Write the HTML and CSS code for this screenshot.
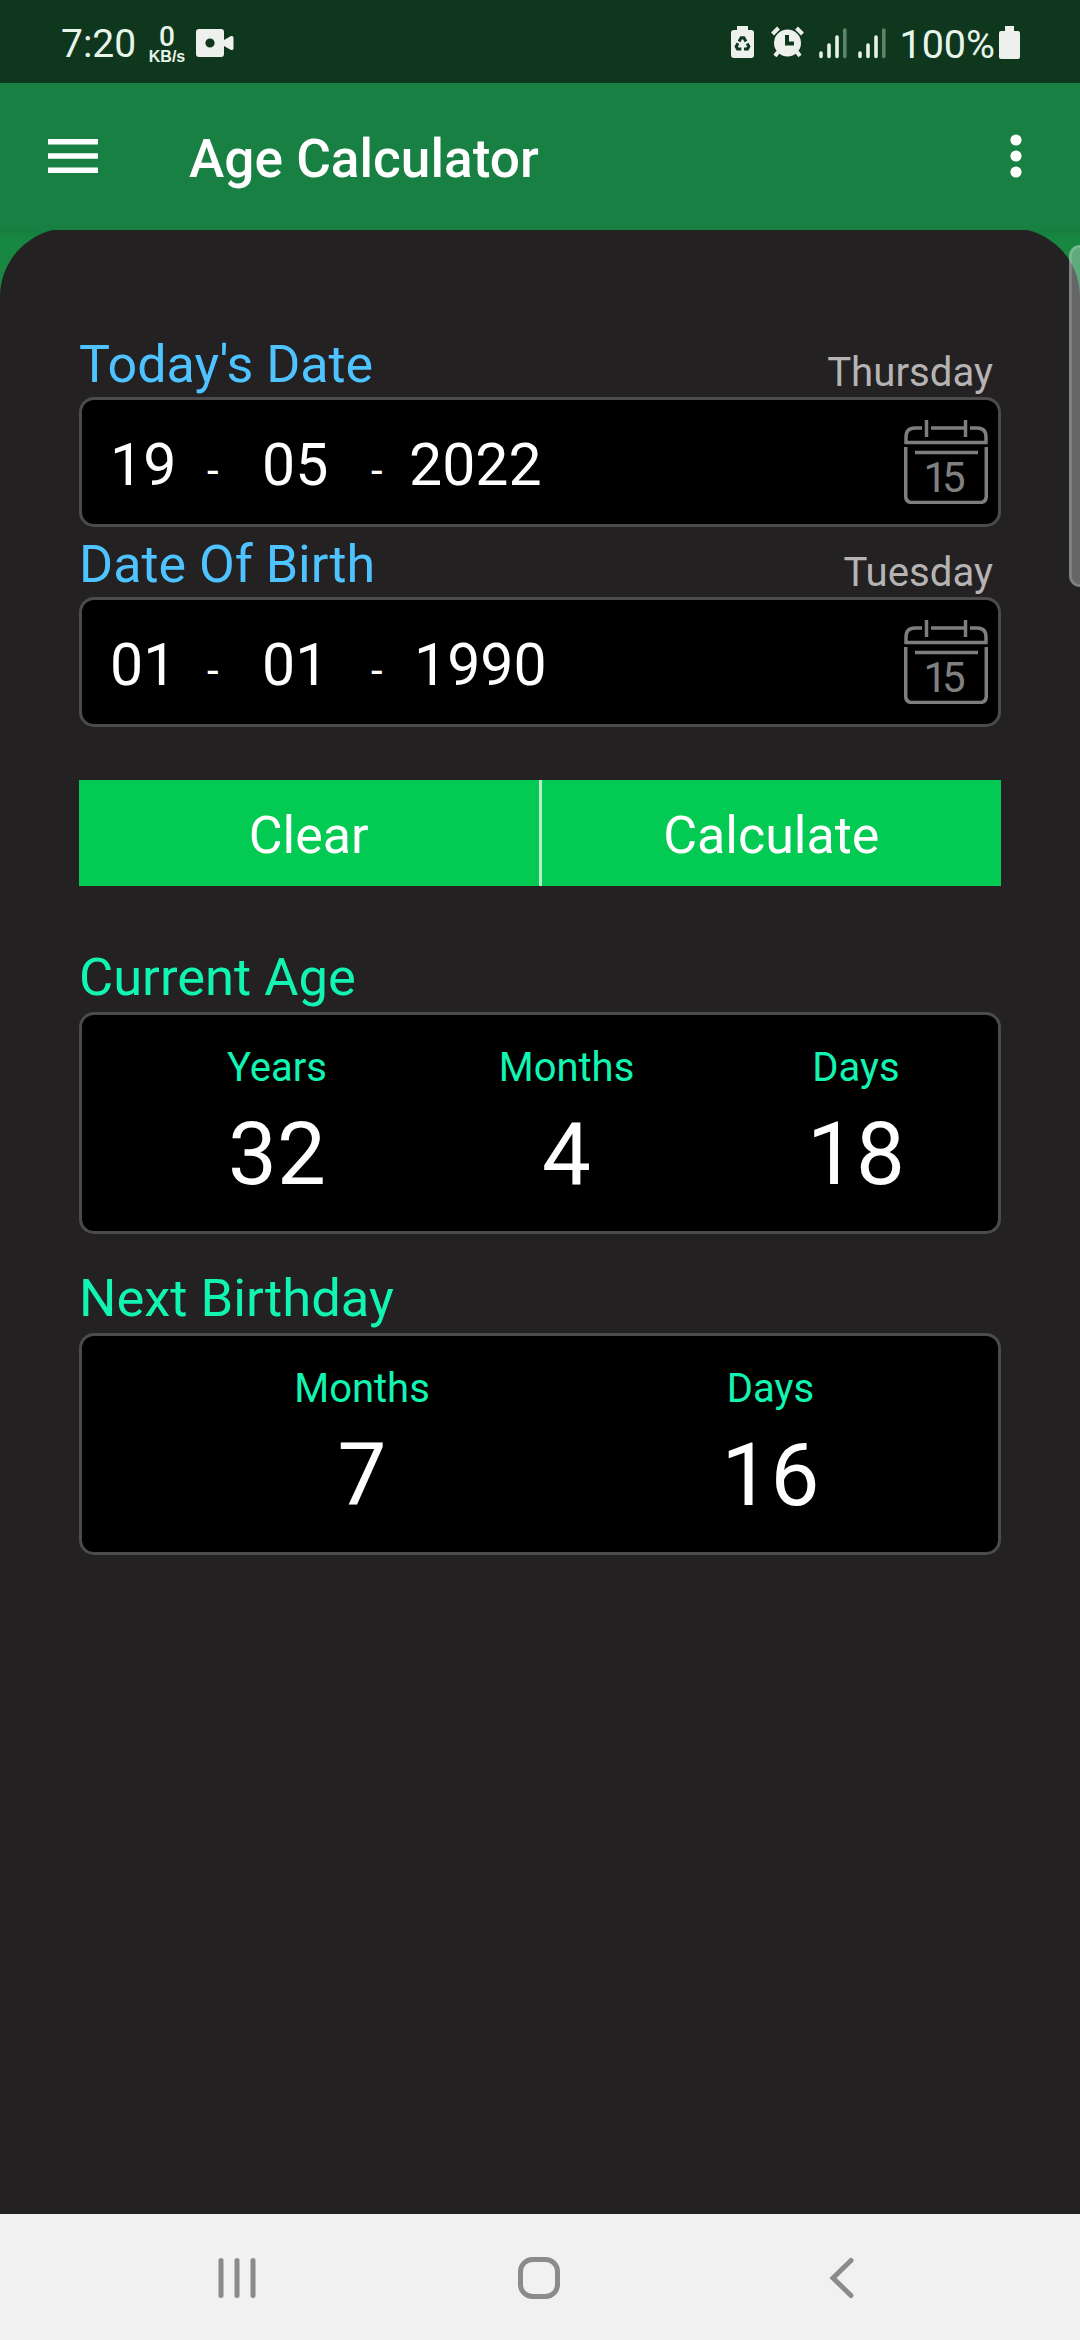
FILE: index.html
```html
<!DOCTYPE html>
<html lang="en">
<head>
    <meta charset="UTF-8">
    <meta name="viewport" content="width=device-width, initial-scale=1.0">
    <title>Age Calculator</title>
    <link rel="stylesheet" href="styles.css">
</head>
<body>
    <div class="status-bar">
        <span class="clock">7:20</span>
        <div class="net-speed">
            <span class="speed">0</span>
            <span class="unit">KB/s</span>
        </div>
        <svg class="video" width="38" height="28" viewBox="0 0 38 28">
            <path fill="#eef0ee" fill-rule="evenodd" d="M3 0h22a3 3 0 0 1 3 3v8l7-4q2.500-.5 2.500 1.500v11q0 2-2.500 1.500l-7-4v8a3 3 0 0 1-3 3H3a3 3 0 0 1-3-3V3a3 3 0 0 1 3-3zM14 9.400a4.600 4.600 0 1 0 0 9.200 4.600 4.600 0 0 0 0-9.200z"/>
        </svg>
        <div class="status-right">
            <svg class="saver" width="23" height="32" viewBox="0 0 23 32">
                <path fill="#eef0ee" d="M6 0h11v4h3a3 3 0 0 1 3 3v22a3 3 0 0 1-3 3H3a3 3 0 0 1-3-3V7a3 3 0 0 1 3-3h3z"/>
                <g fill="none" stroke="#0f371e" stroke-width="3">
                    <path d="M8 15.500l2.200-3.800h2.600l2.200 3.800"/>
                    <path d="M16.200 17.500l1.600 3-1.300 2.500h-3.500"/>
                    <path d="M10.300 23H6.500l-1.300-2.500 1.800-3.200"/>
                </g>
            </svg>
            <svg class="alarm" width="33" height="32" viewBox="0 0 33 32">
                <circle cx="16.500" cy="17" r="13.500" fill="#eef0ee"/>
                <path d="M1.500 8l6-6M31.500 8l-6-6" stroke="#eef0ee" stroke-width="4"/>
                <path d="M7 26l-3 4M26 26l3 4" stroke="#eef0ee" stroke-width="4"/>
                <path d="M16 9v8.500h7" fill="none" stroke="#0f371e" stroke-width="4"/>
            </svg>
            <svg class="signal" width="28" height="31" viewBox="0 0 28 31">
                <g stroke="#e6f2e8" stroke-width="3.600" stroke-linecap="round">
                    <path d="M2 25v3.500M10 17v11.500M18 9v19.500"/>
                    <path stroke="#5c8466" d="M25.800 2v26.500"/>
                </g>
            </svg>
            <svg class="signal" width="28" height="31" viewBox="0 0 28 31">
                <g stroke="#e6f2e8" stroke-width="3.600" stroke-linecap="round">
                    <path d="M2 25v3.500M10 17v11.500M18 9v19.500"/>
                    <path stroke="#5c8466" d="M25.800 2v26.500"/>
                </g>
            </svg>
            <span class="percent">100%</span>
            <svg class="battery" width="21" height="33" viewBox="0 0 21 33">
                <path fill="#eef0ee" d="M6 0h9v5h4a2 2 0 0 1 2 2v24a2 2 0 0 1-2 2H2a2 2 0 0 1-2-2V7a2 2 0 0 1 2-2h4z"/>
            </svg>
        </div>
    </div>

    <div class="app-bar">
        <svg width="50" height="34" viewBox="0 0 50 34">
            <path fill="#fff" d="M0 0h50v5.500H0zM0 14.200h50v5.500H0zM0 28.500h50V34H0z"/>
        </svg>
        <h1 class="title">Age Calculator</h1>
        <svg class="more" width="12" height="44" viewBox="0 0 12 44">
            <g fill="#fff">
                <circle cx="6" cy="6" r="5.600"/>
                <circle cx="6" cy="22" r="5.600"/>
                <circle cx="6" cy="38" r="5.600"/>
            </g>
        </svg>
    </div>

    <div class="page">
        <div class="panel">
            <div class="label-row">
                <span class="label blue">Today's Date</span>
                <span class="weekday">Thursday</span>
            </div>
            <div class="date-box">
                <span class="num day">19</span>
                <span class="dash">-</span>
                <span class="num month">05</span>
                <span class="dash">-</span>
                <span class="num year">2022</span>
                <svg class="calendar" width="84" height="84" viewBox="0 0 84 84">
                    <g fill="none" stroke="#7e7e7e" stroke-width="3.500">
                        <path d="M18 8H11q-9 0-9 9v5.500h80V17q0-9-9-9h-7M27 8h33"/>
                        <path d="M22.500 0v17M61.500 0v17"/>
                        <path d="M1.700 27v49q0 6.500 6.500 6.500h67.600q6.500 0 6.500-6.500V27"/>
                        <path d="M11 32.500h63"/>
                    </g>
                    <text x="38" y="72" class="cal-day">15</text>
                </svg>
            </div>

            <div class="label-row">
                <span class="label blue">Date Of Birth</span>
                <span class="weekday">Tuesday</span>
            </div>
            <div class="date-box">
                <span class="num day">01</span>
                <span class="dash">-</span>
                <span class="num month">01</span>
                <span class="dash">-</span>
                <span class="num year birth-year">1990</span>
                <svg class="calendar" width="84" height="84" viewBox="0 0 84 84">
                    <g fill="none" stroke="#7e7e7e" stroke-width="3.500">
                        <path d="M18 8H11q-9 0-9 9v5.500h80V17q0-9-9-9h-7M27 8h33"/>
                        <path d="M22.500 0v17M61.500 0v17"/>
                        <path d="M1.700 27v49q0 6.500 6.500 6.500h67.600q6.500 0 6.500-6.500V27"/>
                        <path d="M11 32.500h63"/>
                    </g>
                    <text x="38" y="72" class="cal-day">15</text>
                </svg>
            </div>

            <div class="buttons">
                <button class="clear">Clear</button>
                <button class="calculate">Calculate</button>
            </div>

            <div class="label green">Current Age</div>
            <div class="result age">
                <div class="cell"><span class="unit-name">Years</span><span class="value">32</span></div>
                <div class="cell"><span class="unit-name">Months</span><span class="value">4</span></div>
                <div class="cell"><span class="unit-name">Days</span><span class="value">18</span></div>
            </div>

            <div class="label green next">Next Birthday</div>
            <div class="result birthday">
                <div class="cell"><span class="unit-name">Months</span><span class="value">7</span></div>
                <div class="cell"><span class="unit-name">Days</span><span class="value">16</span></div>
            </div>
        </div>
        <div class="scrollbar"></div>
    </div>

    <div class="nav-bar">
        <svg width="40" height="42" viewBox="0 0 40 42">
            <path d="M4 3.500v35M20 3.500v35M36 3.500v35" stroke="#8b8b8b" stroke-width="5" stroke-linecap="round"/>
        </svg>
        <svg class="home" width="42" height="42" viewBox="0 0 42 42">
            <rect x="2.500" y="2.500" width="37" height="37" rx="12" fill="none" stroke="#8b8b8b" stroke-width="5"/>
        </svg>
        <svg width="26" height="42" viewBox="0 0 26 42">
            <path d="M22 3.500L4 21l18 17.500" fill="none" stroke="#8b8b8b" stroke-width="5" stroke-linecap="round"/>
        </svg>
    </div>
</body>
</html>
```
FILE: styles.css
```css
* {
    box-sizing: border-box;
}
body {
    font-family: Roboto, "Noto Sans", sans-serif;
    background-color: #232122;
    color: white;
    margin: 0;
    height: 2340px;
    display: flex;
    flex-direction: column;
}
svg {
    display: block;
    flex: none;
}
.status-bar {
    background-color: #0f371e;
    height: 83px;
    padding: 0 60px 0 61px;
    display: flex;
    align-items: center;
    color: #e8f5ea;
}
.clock {
    width: 87px;
    font-size: 39px;
    line-height: 47px;
    padding-top: 6px;
}
.net-speed {
    width: 38px;
    display: flex;
    flex-direction: column;
    align-items: center;
    padding-top: 5px;
}
.speed {
    font-size: 28px;
    font-weight: 500;
    line-height: 24px;
}
.unit {
    font-family: "Liberation Sans", Arial, sans-serif;
    font-size: 16px;
    font-weight: bold;
    line-height: 15px;
}
.video {
    margin: 3px 0 0 10px;
}
.status-right {
    margin-left: auto;
    display: flex;
    align-items: center;
}
.alarm {
    margin: 0 15px 0 17px;
}
.signal {
    margin: 4px 11px 0 0;
}
.percent {
    font-size: 39.500px;
    line-height: 47px;
    padding: 6px 4px 0 2px;
}
.battery {
    margin-top: 2px;
}
.app-bar {
    background-color: #178042;
    height: 147px;
    padding: 0 58px 0 48px;
    display: flex;
    align-items: center;
}
.app-bar svg {
    margin-top: -2px;
}
.title {
    margin: 4px 0 0 91px;
    font-size: 53.200px;
    font-weight: 500;
}
.app-bar .more {
    margin-left: auto;
}
.page {
    flex: 1;
    position: relative;
    overflow: hidden;
    background: linear-gradient(#177c40, #178741 8px);
}
.scrollbar {
    position: absolute;
    top: 15px;
    right: -11px;
    width: 22px;
    height: 342px;
    border: 3px solid rgba(244, 244, 244, 0.45);
    border-radius: 11px;
    background-color: rgba(244, 244, 244, 0.33);
    background-clip: padding-box;
}
.panel {
    height: 1986px;
    margin-top: -2px;
    padding: 102px 79px 0;
    background-color: #232122;
    border-radius: 69px 69px 0 0;
}
.label-row {
    height: 67px;
    display: flex;
    justify-content: space-between;
}
.date-box + .label-row {
    height: 70px;
    padding-top: 3px;
}
.label {
    font-size: 52px;
    line-height: 66px;
    padding-top: 2px;
}
.blue {
    color: #4fc3ff;
}
.green {
    color: #12f5b2;
    font-size: 52.500px;
}
.weekday {
    color: #b5b3b4;
    font-size: 40.200px;
    line-height: 86px;
    margin-right: 8px;
}
.date-box {
    height: 130px;
    border: 3px solid #4b4b4b;
    border-radius: 15px;
    background-color: #000;
    display: flex;
    align-items: center;
    padding: 0 10px 0 28px;
}
.num {
    font-size: 59px;
    line-height: 70px;
    padding-top: 6px;
}
.day {
    width: 97px;
}
.month {
    width: 109px;
}
.dash {
    width: 55px;
    font-size: 42px;
    padding-top: 17px;
}
.month + .dash {
    width: 38px;
}
.birth-year {
    padding-left: 5px;
}
.calendar {
    margin-left: auto;
}
.cal-day {
    font-size: 42px;
    letter-spacing: -5px;
    fill: #808080;
    text-anchor: middle;
}
.buttons {
    display: flex;
    gap: 3px;
    height: 106px;
    margin: 53px 0 56px;
    background-color: #b9eccc;
}
button {
    flex: 1;
    border: none;
    padding: 4px 0 0;
    background-color: #02ca53;
    color: white;
    font-family: inherit;
    font-size: 52px;
}
.result {
    height: 222px;
    margin-top: 2px;
    border: 3px solid #4b4b4b;
    border-radius: 15px;
    background-color: #000;
    display: grid;
    padding-top: 28px;
}
.age {
    grid-template-columns: 390px 1fr 284px;
}
.age .cell:nth-child(2) {
    padding-right: 53px;
}
.birthday {
    grid-template-columns: 560px 1fr;
}
.birthday .cell:last-child {
    padding-right: 99px;
}
.next {
    margin-top: 29px;
}
.cell {
    display: flex;
    flex-direction: column;
    align-items: center;
}
.unit-name {
    color: #12f5b2;
    font-size: 40px;
    line-height: 50px;
}
.value {
    font-size: 87px;
    line-height: 122px;
}
.nav-bar {
    height: 126px;
    padding: 2px 225px 0 217px;
    background-color: #f1f1f1;
    display: flex;
    justify-content: space-between;
    align-items: center;
}
.home {
    margin-right: 8px;
}
```
